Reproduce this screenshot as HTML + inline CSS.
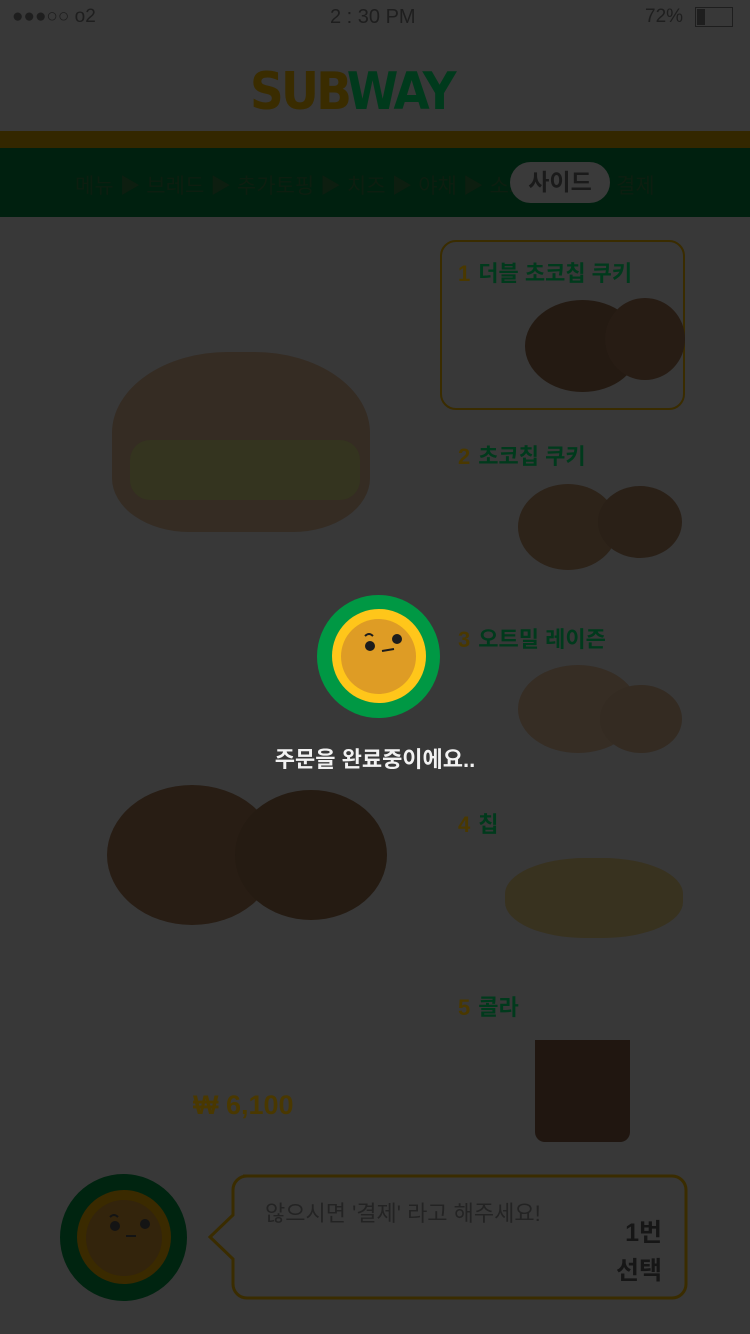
<!DOCTYPE html>
<html><head><meta charset="utf-8"><style>
*{margin:0;padding:0;box-sizing:border-box}
body{width:750px;height:1334px;background:#383838;position:relative;overflow:hidden;font-family:"Liberation Sans","Noto Sans CJK KR",sans-serif}
.a{position:absolute}
.item{position:absolute;left:458px;font-size:22px;font-weight:bold;color:#003a1c}
.item b{color:#4a3800;margin-right:8px}
</style></head><body>
<div class="a" style="left:12px;top:6px;font-size:19px;color:#1e1e1e">●●●○○ o2</div>
<div class="a" style="left:330px;top:6px;font-size:20px;color:#1e1e1e">2 : 30 PM</div>
<div class="a" style="left:645px;top:6px;font-size:19px;color:#1e1e1e">72%</div>
<div class="a" style="left:695px;top:7px;width:38px;height:20px;border:1px solid #1e1e1e"><div style="width:8px;height:16px;margin:1px;background:#1e1e1e"></div></div>
<div class="a" style="left:250px;top:62px;font-size:52px;font-weight:900;letter-spacing:-3px;font-family:'DejaVu Sans',sans-serif;transform:scaleX(0.9);transform-origin:left"><span style="color:#3a2c00">SUB</span><span style="color:#003a1c">WAY</span></div>
<div class="a" style="left:0;top:131px;width:750px;height:17px;background:#332700"></div>
<div class="a" style="left:0;top:148px;width:750px;height:69px;background:#00200f"></div>
<div class="a" style="left:75px;top:170px;font-size:21px;color:#0d1e10">메뉴 ▶ 브레드 ▶ 추가토핑 ▶ 치즈 ▶ 야채 ▶ 소스 ▶</div>
<div class="a" style="left:510px;top:162px;width:100px;height:41px;border-radius:21px;background:#3a3a3a;color:#1a1a1a;font-size:23px;font-weight:bold;text-align:center;line-height:41px">사이드</div>
<div class="a" style="left:616px;top:170px;font-size:21px;color:#0d1e10">결제</div>
<div class="a" style="left:440px;top:240px;width:245px;height:170px;border:2px solid #3a2c00;border-radius:16px"></div>
<div class="item" style="top:256px"><b>1</b>더블 초코칩 쿠키</div>
<div class="item" style="top:439px"><b>2</b>초코칩 쿠키</div>
<div class="item" style="top:622px"><b>3</b>오트밀 레이즌</div>
<div class="item" style="top:807px"><b>4</b>칩</div>
<div class="item" style="top:990px"><b>5</b>콜라</div>
<div class="a" style="left:525px;top:300px;width:115px;height:92px;border-radius:50%;background:#241a12"></div>
<div class="a" style="left:605px;top:298px;width:80px;height:82px;border-radius:50%;background:#271c14"></div>
<div class="a" style="left:518px;top:484px;width:100px;height:86px;border-radius:50%;background:#2d2319"></div>
<div class="a" style="left:598px;top:486px;width:84px;height:72px;border-radius:50%;background:#2a2017"></div>
<div class="a" style="left:518px;top:665px;width:120px;height:88px;border-radius:50%;background:#362d24"></div>
<div class="a" style="left:600px;top:685px;width:82px;height:68px;border-radius:50%;background:#342b22"></div>
<div class="a" style="left:505px;top:858px;width:178px;height:80px;border-radius:45%;background:#38321f"></div>
<div class="a" style="left:535px;top:1040px;width:95px;height:102px;background:#201610;border-radius:0 0 10px 10px"></div>
<div class="a" style="left:112px;top:352px;width:258px;height:180px;border-radius:45% 45% 30% 30%;background:#352c23"></div>
<div class="a" style="left:130px;top:440px;width:230px;height:60px;background:#34341f;border-radius:20px"></div>
<div class="a" style="left:107px;top:785px;width:170px;height:140px;border-radius:50%;background:#281d14"></div>
<div class="a" style="left:235px;top:790px;width:152px;height:130px;border-radius:50%;background:#251b12"></div>
<div class="a" style="left:193px;top:1090px;font-size:27px;font-weight:bold;color:#4a3800">₩ 6,100</div>
<div class="a" style="left:317px;top:595px;width:123px;height:123px;border-radius:50%;background:#009844"></div>
<div class="a" style="left:332px;top:609px;width:94px;height:94px;border-radius:50%;background:#ffc61a"></div>
<div class="a" style="left:341px;top:619px;width:75px;height:75px;border-radius:50%;background:#de9c25"></div>
<svg class="a" style="left:341px;top:619px" width="75" height="75"><circle cx="29" cy="27" r="5" fill="#1c1c1c"/><circle cx="56" cy="20" r="5" fill="#1c1c1c"/><path d="M24 17 q4-4 8 0" stroke="#1c1c1c" stroke-width="2" fill="none"/><path d="M41 32 l12-2" stroke="#1c1c1c" stroke-width="2"/></svg>
<div class="a" style="left:0;width:750px;top:742px;text-align:center;font-size:22px;font-weight:bold;color:#f2f2f2">주문을 완료중이에요..</div>
<div class="a" style="left:60px;top:1174px;width:127px;height:127px;border-radius:50%;background:#002410"></div>
<div class="a" style="left:77px;top:1190px;width:94px;height:94px;border-radius:50%;background:#3a2a00"></div>
<div class="a" style="left:86px;top:1200px;width:76px;height:76px;border-radius:50%;background:#33240c"></div>
<svg class="a" style="left:86px;top:1200px" width="76" height="76"><circle cx="29" cy="26" r="5" fill="#141414"/><circle cx="59" cy="24" r="5" fill="#141414"/><path d="M24 17 q4-4 8 0" stroke="#141414" stroke-width="2" fill="none"/><path d="M40 36 h10" stroke="#141414" stroke-width="2"/></svg>
<svg class="a" style="left:205px;top:1172px" width="485" height="132"><path d="M38 4 H467 a14 14 0 0 1 14 14 V112 a14 14 0 0 1 -14 14 H42 a14 14 0 0 1 -14 -14 V87 L5 65 L28 43 V18 a14 14 0 0 1 14 -14z" fill="none" stroke="#3a2c00" stroke-width="3"/></svg>
<div class="a" style="left:265px;top:1196px;font-size:22px;color:#232323">않으시면 '결제' 라고 해주세요!</div>
<div class="a" style="left:600px;top:1214px;width:62px;text-align:right;font-size:25px;font-weight:bold;color:#161616;line-height:38px">1번<br>선택</div>
</body></html>
